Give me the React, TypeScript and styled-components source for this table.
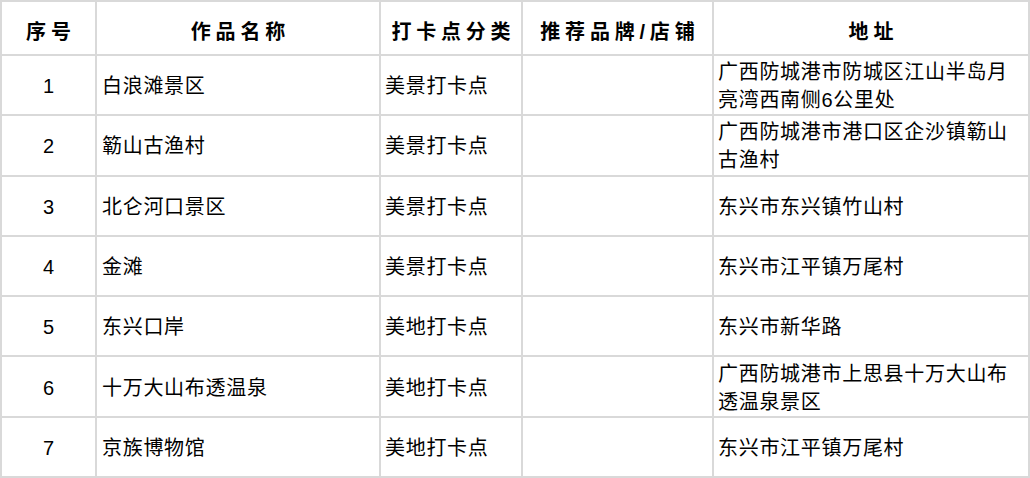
import React from "react";
import styled, { createGlobalStyle } from "styled-components";

const GlobalStyle = createGlobalStyle`
  html, body {
    margin: 0;
    padding: 0;
    background: #ffffff;
  }
  body {
    font-family: "Liberation Sans", "Noto Sans CJK SC", sans-serif;
    color: #000000;
  }
`;

const Table = styled.div`
  display: grid;
  width: 1030px;
  height: 478px;
  box-sizing: border-box;
  padding: 2px;
  gap: 2px;
  background: #d9d9d9;
  grid-template-columns: 93px 282px 140px 189px 314px;
  grid-template-rows: 52px repeat(7, 1fr);
`;

const Row = styled.div`
  display: contents;
`;

const HeadCell = styled.div`
  background: #ffffff;
  display: flex;
  align-items: center;
  justify-content: center;
  padding-top: 4px;
  box-sizing: border-box;
  font-size: 20px;
  font-weight: 700;
  letter-spacing: 4.8px;
  text-indent: 4.8px;
  white-space: nowrap;
`;

const Cell = styled.div<{ $align?: "center" | "left"; $pad?: number }>`
  background: #ffffff;
  display: flex;
  align-items: center;
  justify-content: ${(p) => (p.$align === "center" ? "center" : "flex-start")};
  padding: 2px ${(p) => p.$pad ?? 4}px 0 ${(p) => p.$pad ?? 4}px;
  box-sizing: border-box;
  font-size: 20px;
  letter-spacing: 0.7px;
  line-height: 28px;
`;

const Num = styled.span`
  font-family: "Liberation Sans", sans-serif;
  font-size: 20px;
  letter-spacing: 0;
`;

type Item = { no: string; name: string; cat: string; brand: string; addr: string };

const items: Item[] = [
  { no: "1", name: "白浪滩景区", cat: "美景打卡点", brand: "", addr: "广西防城港市防城区江山半岛月亮湾西南侧6公里处" },
  { no: "2", name: "簕山古渔村", cat: "美景打卡点", brand: "", addr: "广西防城港市港口区企沙镇簕山古渔村" },
  { no: "3", name: "北仑河口景区", cat: "美景打卡点", brand: "", addr: "东兴市东兴镇竹山村" },
  { no: "4", name: "金滩", cat: "美景打卡点", brand: "", addr: "东兴市江平镇万尾村" },
  { no: "5", name: "东兴口岸", cat: "美地打卡点", brand: "", addr: "东兴市新华路" },
  { no: "6", name: "十万大山布透温泉", cat: "美地打卡点", brand: "", addr: "广西防城港市上思县十万大山布透温泉景区" },
  { no: "7", name: "京族博物馆", cat: "美地打卡点", brand: "", addr: "东兴市江平镇万尾村" },
];

const headers = ["序号", "作品名称", "打卡点分类", "推荐品牌/店铺", "地址"];

export default function App() {
  return (
    <>
      <GlobalStyle />
      <Table>
        <Row>
          {headers.map((h) => (
            <HeadCell key={h}>{h}</HeadCell>
          ))}
        </Row>
        {items.map((it) => (
          <Row key={it.no}>
            <Cell $align="center">
              <Num>{it.no}</Num>
            </Cell>
            <Cell $pad={5}>{it.name}</Cell>
            <Cell>{it.cat}</Cell>
            <Cell>{it.brand}</Cell>
            <Cell>{it.addr}</Cell>
          </Row>
        ))}
      </Table>
    </>
  );
}
